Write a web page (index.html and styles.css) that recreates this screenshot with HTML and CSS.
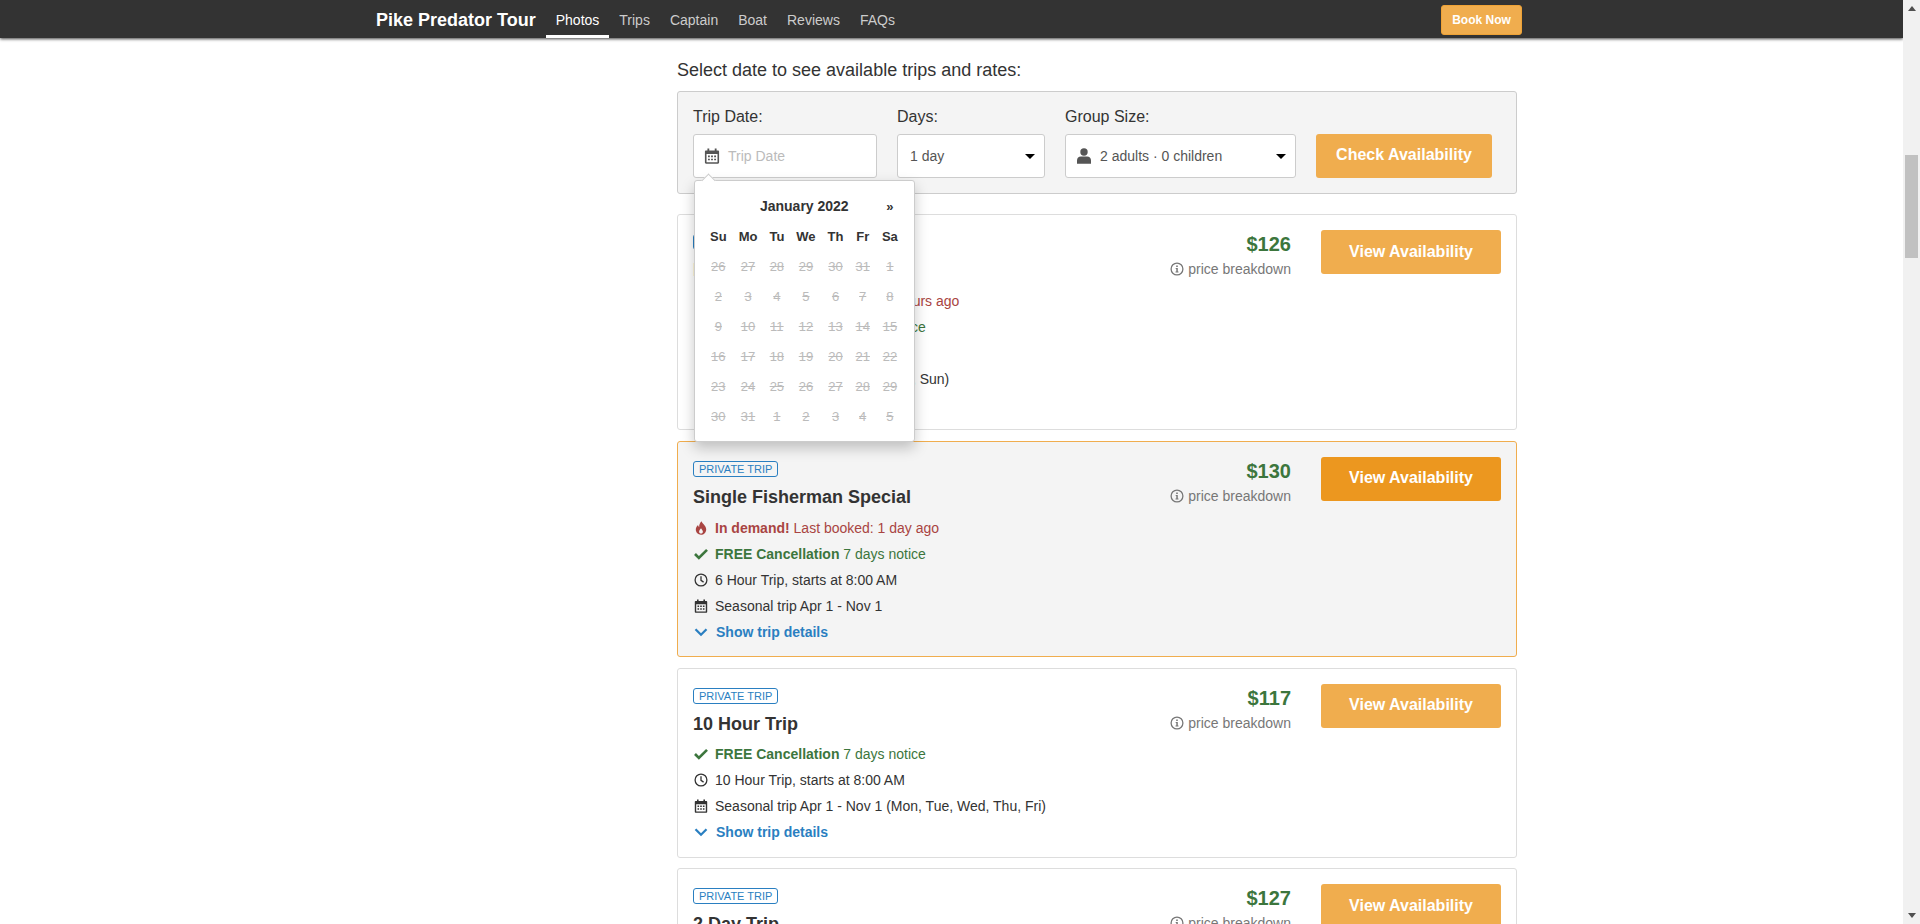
FILE: index.html
```html
<!DOCTYPE html>
<html lang="en">
<head>
  <meta charset="UTF-8">
  <title>Pike Predator Tour</title>
  <link rel="stylesheet" href="styles.css">
</head>
<body>
  <svg class="icon-defs" aria-hidden="true">
    <symbol id="i-calendar" viewBox="0 0 14 14">
      <path d="M3 .5h1.600v1.600h4.800V.5H11v1.600h1.200c.6 0 1 .4 1 1v9.600c0 .6-.4 1-1 1H1.800c-.6 0-1-.4-1-1V3.100c0-.6.4-1 1-1H3zM2.200 5.200v7.200h9.600V5.200z" fill="currentColor"/>
      <path d="M3.500 6.600h1.600v1.500H3.500zM6.200 6.600h1.600v1.500H6.200zM8.900 6.600h1.600v1.500H8.900zM3.500 9.300h1.600v1.500H3.500zM6.200 9.300h1.600v1.500H6.200zM8.900 9.300h1.600v1.500H8.900z" fill="currentColor"/>
    </symbol>
    <symbol id="i-flame" viewBox="0 0 14 14">
      <path d="M7.500 .2c.6 2.300 4.700 4.300 4.700 8 0 3.300-2.300 5.600-5.200 5.600S1.800 11.500 1.800 8.600c0-2 1-3.500 2.200-4.600.1 1 .5 1.700 1.200 2.100C5 4 5.900 1.800 7.500 .2zM7 7.300c-.6 1.100-1.900 1.900-1.900 3.400 0 1.100.8 1.800 1.900 1.800s1.900-.8 1.900-1.800c0-1.400-1.300-2.200-1.900-3.400z" fill="currentColor" fill-rule="evenodd"/>
    </symbol>
    <symbol id="i-check" viewBox="0 0 14 14">
      <path d="M1 7l3.900 3.900L13 2.900" fill="none" stroke="currentColor" stroke-width="2.700"/>
    </symbol>
    <symbol id="i-clock" viewBox="0 0 14 14">
      <circle cx="7" cy="7" r="5.900" fill="none" stroke="currentColor" stroke-width="1.300"/>
      <path d="M7 3.200V7.300l2.600 1.800" fill="none" stroke="currentColor" stroke-width="1.300"/>
    </symbol>
    <symbol id="i-chevron" viewBox="0 0 14 14">
      <path d="M1.500 4.300L7 9.700l5.500-5.400" fill="none" stroke="currentColor" stroke-width="2.300"/>
    </symbol>
    <symbol id="i-info" viewBox="0 0 14 14">
      <circle cx="7" cy="7" r="5.900" fill="none" stroke="currentColor" stroke-width="1.300"/>
      <path d="M6.200 3.500h1.600v1.500H6.200zM5.700 6h2.100v3.500h.7v1H5.500v-1h.8V7h-.6z" fill="currentColor"/>
    </symbol>
    <symbol id="i-user" viewBox="0 0 14 16">
      <circle cx="7" cy="4" r="3.700" fill="currentColor"/>
      <path d="M0 15.800v-3.300c0-2.400 1.700-4 3.800-4h6.400c2.100 0 3.800 1.600 3.800 4v3.300z" fill="currentColor"/>
    </symbol>
  </svg>

  <div class="page">
    <div class="viewport">
      <nav class="topnav">
        <div class="topnav-left">
          <a class="brand">Pike Predator Tour</a>
          <a class="tab active">Photos</a>
          <a class="tab">Trips</a>
          <a class="tab">Captain</a>
          <a class="tab">Boat</a>
          <a class="tab">Reviews</a>
          <a class="tab">FAQs</a>
        </div>
        <a class="book-now">Book Now</a>
      </nav>

      <main class="content">
        <h2 class="select-title">Select date to see available trips and rates:</h2>

        <form class="search-panel">
          <div class="field field-date">
            <label class="field-label">Trip Date:</label>
            <div class="control">
              <svg class="control-icon"><use href="#i-calendar"/></svg>
              <span class="placeholder">Trip Date</span>
            </div>
            <div class="calendar">
              <table>
                <tr class="cal-head">
                  <th></th>
                  <th colspan="5" class="cal-month">January 2022</th>
                  <th class="cal-next">»</th>
                </tr>
                <tr class="cal-days">
                  <th>Su</th><th>Mo</th><th>Tu</th><th>We</th><th>Th</th><th>Fr</th><th>Sa</th>
                </tr>
                <tr><td>26</td><td>27</td><td>28</td><td>29</td><td>30</td><td>31</td><td>1</td></tr>
                <tr><td>2</td><td>3</td><td>4</td><td>5</td><td>6</td><td>7</td><td>8</td></tr>
                <tr><td>9</td><td>10</td><td>11</td><td>12</td><td>13</td><td>14</td><td>15</td></tr>
                <tr><td>16</td><td>17</td><td>18</td><td>19</td><td>20</td><td>21</td><td>22</td></tr>
                <tr><td>23</td><td>24</td><td>25</td><td>26</td><td>27</td><td>28</td><td>29</td></tr>
                <tr><td>30</td><td>31</td><td>1</td><td>2</td><td>3</td><td>4</td><td>5</td></tr>
              </table>
            </div>
          </div>
          <div class="field field-days">
            <label class="field-label">Days:</label>
            <div class="control control-select">
              <span>1 day</span>
              <i class="caret"></i>
            </div>
          </div>
          <div class="field field-group">
            <label class="field-label">Group Size:</label>
            <div class="control control-select">
              <svg class="control-icon user-icon"><use href="#i-user"/></svg>
              <span class="group-value">2 adults · 0 children</span>
              <i class="caret"></i>
            </div>
          </div>
          <button type="button" class="btn btn-check">Check Availability</button>
        </form>

        <article class="trip">
          <div class="trip-info">
            <span class="badge">Private Trip</span>
            <h3 class="trip-name">Full Day Trip</h3>
            <div class="row demand"><svg class="row-icon"><use href="#i-flame"/></svg><span><b>In demand!</b> Last booked: 21 hours ago</span></div>
            <div class="row free"><svg class="row-icon"><use href="#i-check"/></svg><span><b>FREE Cancellation</b> 7 days notice</span></div>
            <div class="row"><svg class="row-icon"><use href="#i-clock"/></svg><span>8 Hour Trip, starts at 8:00 AM</span></div>
            <div class="row"><svg class="row-icon"><use href="#i-calendar"/></svg><span>Seasonal trip Apr 1 - Nov 1 (Sat, Sun)</span></div>
            <div class="row details"><svg class="row-icon"><use href="#i-chevron"/></svg><span>Show trip details</span></div>
          </div>
          <div class="trip-price">
            <div class="price">$126</div>
            <div class="breakdown"><svg class="info-icon"><use href="#i-info"/></svg>price breakdown</div>
          </div>
          <button type="button" class="btn btn-view">View Availability</button>
        </article>

        <article class="trip trip-hover">
          <div class="trip-info">
            <span class="badge">Private Trip</span>
            <h3 class="trip-name">Single Fisherman Special</h3>
            <div class="row demand"><svg class="row-icon"><use href="#i-flame"/></svg><span><b>In demand!</b> Last booked: 1 day ago</span></div>
            <div class="row free"><svg class="row-icon"><use href="#i-check"/></svg><span><b>FREE Cancellation</b> 7 days notice</span></div>
            <div class="row"><svg class="row-icon"><use href="#i-clock"/></svg><span>6 Hour Trip, starts at 8:00 AM</span></div>
            <div class="row"><svg class="row-icon"><use href="#i-calendar"/></svg><span>Seasonal trip Apr 1 - Nov 1</span></div>
            <div class="row details"><svg class="row-icon"><use href="#i-chevron"/></svg><span>Show trip details</span></div>
          </div>
          <div class="trip-price">
            <div class="price">$130</div>
            <div class="breakdown"><svg class="info-icon"><use href="#i-info"/></svg>price breakdown</div>
          </div>
          <button type="button" class="btn btn-view">View Availability</button>
        </article>

        <article class="trip">
          <div class="trip-info">
            <span class="badge">Private Trip</span>
            <h3 class="trip-name">10 Hour Trip</h3>
            <div class="row free"><svg class="row-icon"><use href="#i-check"/></svg><span><b>FREE Cancellation</b> 7 days notice</span></div>
            <div class="row"><svg class="row-icon"><use href="#i-clock"/></svg><span>10 Hour Trip, starts at 8:00 AM</span></div>
            <div class="row"><svg class="row-icon"><use href="#i-calendar"/></svg><span>Seasonal trip Apr 1 - Nov 1 (Mon, Tue, Wed, Thu, Fri)</span></div>
            <div class="row details"><svg class="row-icon"><use href="#i-chevron"/></svg><span>Show trip details</span></div>
          </div>
          <div class="trip-price">
            <div class="price">$117</div>
            <div class="breakdown"><svg class="info-icon"><use href="#i-info"/></svg>price breakdown</div>
          </div>
          <button type="button" class="btn btn-view">View Availability</button>
        </article>

        <article class="trip">
          <div class="trip-info">
            <span class="badge">Private Trip</span>
            <h3 class="trip-name">2 Day Trip</h3>
          </div>
          <div class="trip-price">
            <div class="price">$127</div>
            <div class="breakdown"><svg class="info-icon"><use href="#i-info"/></svg>price breakdown</div>
          </div>
          <button type="button" class="btn btn-view">View Availability</button>
        </article>
      </main>
    </div>

    <div class="scrollbar">
      <i class="scroll-up"></i>
      <div class="scroll-track"><div class="scroll-thumb"></div></div>
      <i class="scroll-down"></i>
    </div>
  </div>
</body>
</html>
```

FILE: styles.css
```css
html, body {
  margin: 0;
  height: 924px;
  overflow: hidden;
}
body {
  font-family: "Liberation Sans", Arial, sans-serif;
  font-size: 14px;
  color: #333;
  background: #fff;
}
.icon-defs {
  display: none;
}

.page {
  display: flex;
  height: 924px;
}
.viewport {
  flex: 1;
  min-width: 0;
  overflow: hidden;
}

/* top bar */
.topnav {
  position: relative;
  z-index: 5;
  display: flex;
  justify-content: space-between;
  align-items: center;
  height: 38px;
  padding: 0 381px 0 376px;
  background: #333;
  box-shadow: 0 1px 3px rgba(0, 0, 0, .75);
}
.topnav-left {
  display: flex;
  align-items: stretch;
  height: 38px;
}
.brand {
  margin-right: 10px;
  font-size: 18px;
  font-weight: bold;
  line-height: 40px;
  color: #fff;
}
.tab {
  padding: 0 10px;
  line-height: 40px;
  color: #ccc;
}
.tab.active {
  color: #fff;
  box-shadow: inset 0 -3px 0 #fff;
}
.book-now {
  box-sizing: border-box;
  width: 81px;
  height: 30px;
  margin-top: 2px;
  font-size: 12px;
  font-weight: bold;
  line-height: 28px;
  text-align: center;
  color: #fff;
  background: #f0ad4e;
  border: 1px solid #eea236;
  border-radius: 3px;
}

/* main column */
.content {
  width: 840px;
  margin-left: 677px;
}
.select-title {
  margin: 0 0 11px;
  padding-top: 22px;
  font-size: 18px;
  font-weight: normal;
  line-height: 20px;
}

.search-panel {
  display: flex;
  align-items: flex-end;
  gap: 20px;
  margin-bottom: 20px;
  padding: 15px;
  background: #f4f4f4;
  border: 1px solid #ccc;
  border-radius: 3px;
}
.field {
  position: relative;
}
.field-date { width: 184px; }
.field-days { width: 148px; }
.field-group { width: 231px; }
.field-label {
  display: block;
  margin-bottom: 7px;
  font-size: 16px;
  line-height: 20px;
}
.control {
  box-sizing: border-box;
  display: flex;
  align-items: center;
  height: 44px;
  padding: 0 13px 0 10px;
  background: #fff;
  border: 1px solid #ccc;
  border-radius: 3px;
  color: #555;
}
.control-select {
  justify-content: space-between;
  padding-left: 12px;
}
.control-icon {
  flex: none;
  width: 16px;
  height: 16px;
  margin-right: 8px;
  color: #555;
}
.user-icon {
  width: 14px;
  height: 16px;
  margin: 0 9px 0 -1px;
}
.group-value {
  flex: 1;
}
.placeholder {
  color: #bbb;
}
.caret {
  flex: none;
  width: 0;
  height: 0;
  margin-right: -4px;
  border-top: 5px solid #000;
  border-left: 5px solid transparent;
  border-right: 5px solid transparent;
}

.btn {
  font-family: inherit;
  font-weight: bold;
  font-size: 16px;
  color: #fff;
  background: #f0ad4e;
  border: 0;
  border-radius: 3px;
  padding: 0 0 3px;
}
.btn-check {
  width: 176px;
  height: 44px;
}
.btn-view {
  flex: none;
  width: 180px;
  height: 44px;
  margin-left: 30px;
  padding-bottom: 1px;
}

/* date picker */
.calendar {
  position: absolute;
  top: 73px;
  left: 1px;
  z-index: 3;
  width: 221px;
  box-sizing: border-box;
  padding: 10px 0 10px 9px;
  background: #fff;
  border: 1px solid #ccc;
  border-radius: 3px;
  box-shadow: 0 6px 14px rgba(0, 0, 0, .22);
}
.calendar::before {
  content: "";
  position: absolute;
  top: -6px;
  left: 8px;
  width: 10px;
  height: 10px;
  background: #fff;
  border-top: 1px solid #ccc;
  border-left: 1px solid #ccc;
  transform: rotate(45deg) scale(.9);
}
.calendar table {
  border-collapse: collapse;
  border-spacing: 0;
}
.calendar th,
.calendar td {
  height: 30px;
  padding: 0 6px;
  font-size: 13px;
  text-align: center;
}
.calendar td {
  color: #bbb;
  text-decoration: line-through;
}
.calendar .cal-month {
  font-size: 14px;
}

/* trip cards */
.trip {
  display: flex;
  align-items: flex-start;
  margin-bottom: 10.5px;
  padding: 15px 15px 11.6px;
  background: #fff;
  border: 1px solid #ddd;
  border-radius: 3px;
}
.trip-hover {
  background: #f4f4f4;
  border-color: #f0ad4e;
}
.trip-hover .btn-view {
  background: #ec971f;
}
.trip-info {
  flex: 1;
  padding-top: 4px;
}
.badge {
  display: inline-block;
  box-sizing: border-box;
  height: 16px;
  padding: 0 5px;
  font-size: 11px;
  line-height: 14px;
  text-transform: uppercase;
  color: #2a7fc1;
  border: 1px solid #2a7fc1;
  border-radius: 3px;
  vertical-align: top;
}
.trip-name {
  margin: 9px 0 5.4px;
  font-size: 18px;
  font-weight: bold;
  line-height: 23.33px;
}
.row {
  display: flex;
  align-items: center;
  height: 26px;
}
.row-icon {
  flex: none;
  width: 14px;
  height: 14px;
  margin: 0 7px 0 1px;
}
.demand { color: #a94442; }
.free { color: #3c763d; }
.details {
  font-weight: bold;
  color: #2a7fc1;
}
.details .row-icon {
  margin-right: 8px;
}

.trip-price {
  text-align: right;
}
.price {
  font-size: 20px;
  font-weight: bold;
  line-height: 28px;
  color: #3c763d;
}
.breakdown {
  display: flex;
  align-items: center;
  justify-content: flex-end;
  margin-top: 1px;
  line-height: 20px;
  color: #777;
}
.info-icon {
  width: 14px;
  height: 14px;
  margin-right: 4px;
}

/* page scrollbar */
.scrollbar {
  flex: none;
  display: flex;
  flex-direction: column;
  align-items: center;
  width: 17px;
  background: #f1f1f1;
}
.scroll-up,
.scroll-down {
  flex: none;
  width: 0;
  height: 0;
  margin: 6px 0;
  border-left: 4px solid transparent;
  border-right: 4px solid transparent;
}
.scroll-up { border-bottom: 5px solid #505050; }
.scroll-down { border-top: 5px solid #505050; }
.scroll-track {
  flex: 1;
  align-self: stretch;
  padding: 138px 2px 0;
}
.scroll-thumb {
  height: 103px;
  background: #c1c1c1;
}
```
